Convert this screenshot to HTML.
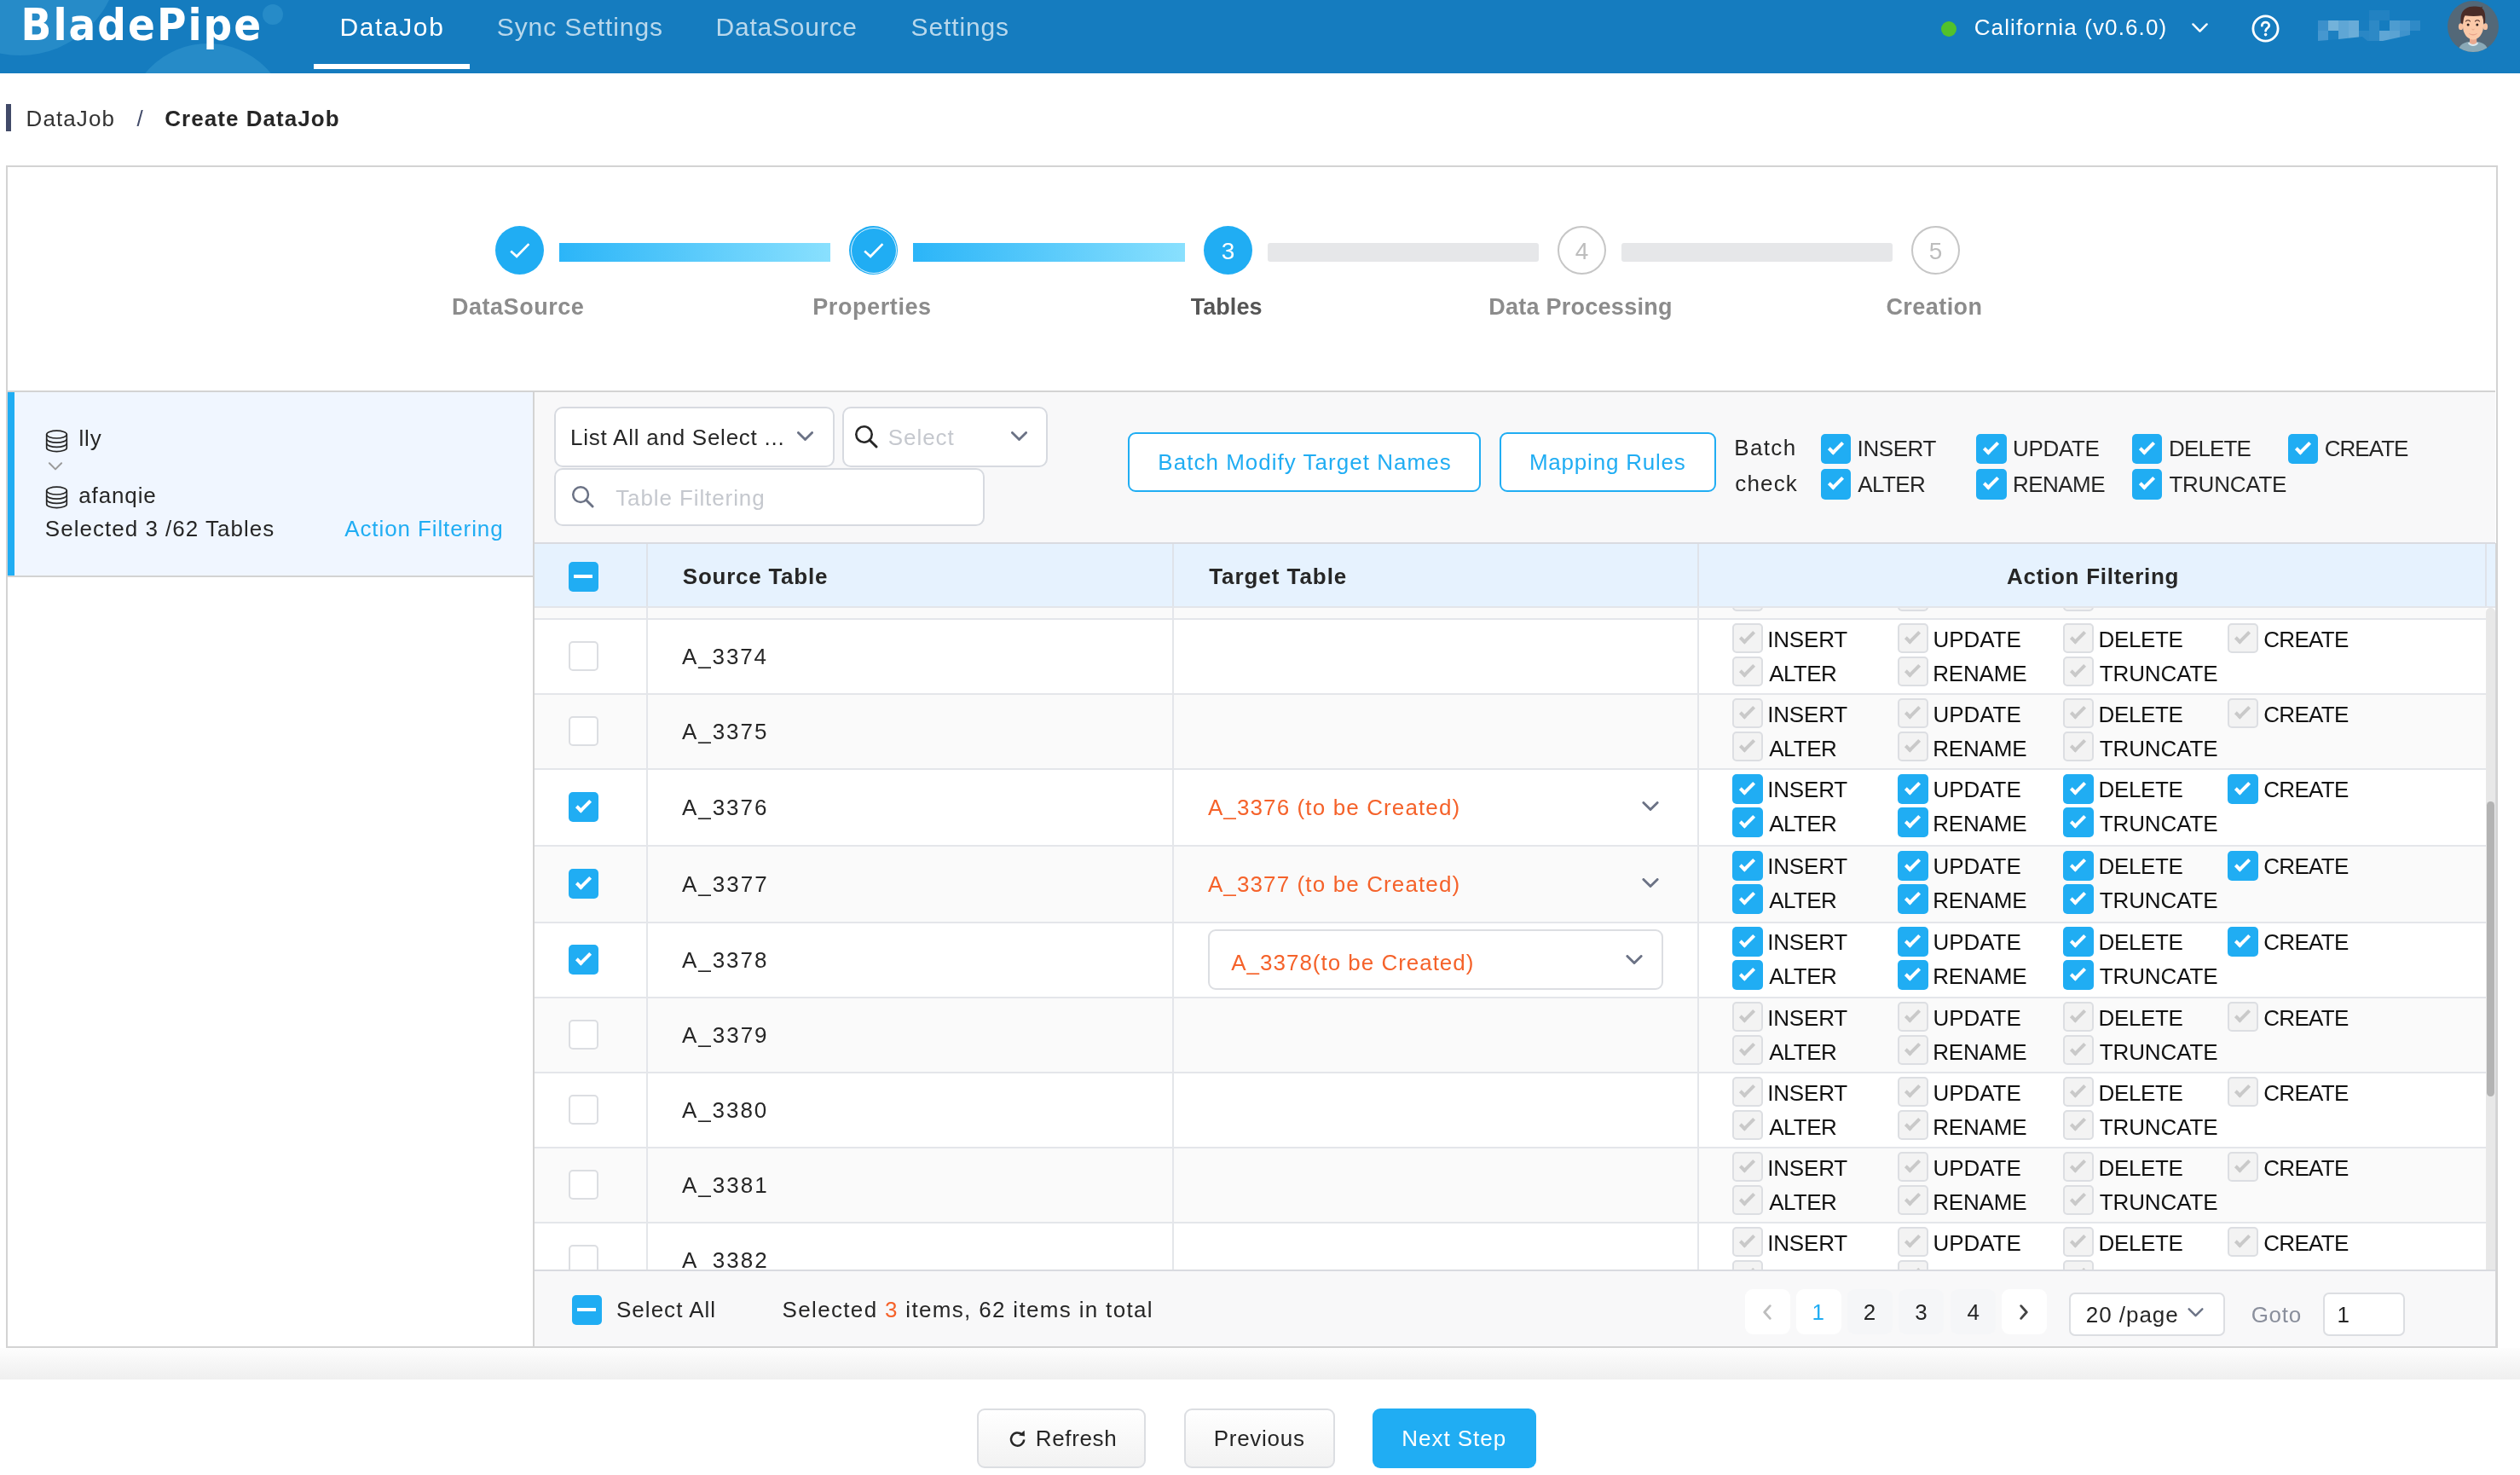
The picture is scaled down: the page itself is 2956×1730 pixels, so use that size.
<!DOCTYPE html>
<html lang="en"><head><meta charset="utf-8"><title>BladePipe - Create DataJob</title>
<style>
html,body{margin:0;padding:0}
body{width:2956px;height:1730px;position:relative;overflow:hidden;background:#fff;font-family:"Liberation Sans",sans-serif;color:#262626}
div,.a,.t,.cb{position:absolute;box-sizing:content-box}
#pg{left:0;top:0;width:2956px;height:1730px;overflow:hidden;will-change:transform}
.t{white-space:nowrap;display:block}
.hdr{background:#157cbf;overflow:hidden}
.logo{font-family:"DejaVu Sans Condensed","DejaVu Sans","Liberation Sans",sans-serif;font-weight:700;font-stretch:condensed}
.circ{border-radius:50%;background:#268bc8;display:block}
.row{left:0;width:2289px;border-bottom:0}
.row::after{content:"";position:absolute;left:0;right:0;top:-1px;height:2px;background:#e4e6ea}
.row.g{background:#fafafa}
.row.w{background:#fff}
.cb{display:block;width:35px;height:35px;border-radius:5px;box-sizing:border-box}
.cb.w{width:36px}
.cb.h{height:36px}
.cb.on,.cb.ind{background:#20adf3}
.cb.off{background:#fff;border:2px solid #dcdee2}
.cb.dis{background:#f3f3f3;border:2px solid #dcdee2}
.cb.on::after,.cb.dis::after{content:"";position:absolute;left:13px;top:6.4px;width:5px;height:14px;border:solid #fff;border-width:0 4px 4px 0;transform:rotate(45deg);box-sizing:content-box}
.cb.dis::after{border-color:#c9c9c9;left:11px;top:4.4px}
.cb.ind::after{content:"";position:absolute;left:6px;top:15px;width:22px;height:4px;background:#fff}
</style></head>
<body>
<div id="pg">
<div class="hdr a" style="left:0;top:0;width:2956px;height:86px">
<i class="a circ" style="left:-92.600px;top:-167.600px;width:233px;height:233px"></i>
<i class="a circ" style="left:149px;top:51px;width:190px;height:190px"></i>
<i class="a circ" style="left:307.800px;top:4.500px;width:24px;height:24px"></i>
</div>
<span class="t logo" style="left:24.5px;top:2.5px;font-size:52.3px;line-height:52.3px;letter-spacing:2.03px;color:#fff">BladePipe</span>
<span class="t" style="left:398.5px;top:17.1px;font-size:30px;line-height:30px;letter-spacing:1.60px;color:#fff;">DataJob</span>
<span class="t" style="left:582.8px;top:17.1px;font-size:30px;line-height:30px;letter-spacing:0.90px;color:#b9d8ec;">Sync Settings</span>
<span class="t" style="left:839.5px;top:17.1px;font-size:30px;line-height:30px;letter-spacing:0.77px;color:#b9d8ec;">DataSource</span>
<span class="t" style="left:1068.6px;top:17.1px;font-size:30px;line-height:30px;letter-spacing:0.86px;color:#b9d8ec;">Settings</span>
<div style="left:368px;top:75px;width:183px;height:6px;background:#fff"></div>
<div style="left:2277px;top:25px;width:18px;height:18px;background:#52c12c;border-radius:50%"></div>
<span class="t" style="left:2315.7px;top:19.0px;font-size:26px;line-height:26px;letter-spacing:1.13px;color:#fff;">California (v0.6.0)</span>
<svg class="a" style="left:2571px;top:27px" width="19" height="11.5" viewBox="0 0 20 12"><path d="M1.5 1.5 L10 10 L18.5 1.5" fill="none" stroke="#fff" stroke-width="2.6" stroke-linecap="round" stroke-linejoin="round"/></svg>
<svg class="a" style="left:2641px;top:17px" width="33" height="33" viewBox="0 0 33 33"><circle cx="16.5" cy="16.5" r="14.6" fill="none" stroke="#fff" stroke-width="2.8"/><path d="M12.3 13.2c0-2.5 1.9-4 4.2-4s4.2 1.5 4.2 3.7c0 3-4.1 3.2-4.1 6.3" fill="none" stroke="#fff" stroke-width="2.8" stroke-linecap="round"/><circle cx="16.6" cy="23.6" r="1.8" fill="#fff"/></svg>
<svg class="a" style="left:2719px;top:12px" width="120" height="36" viewBox="0 0 120 36"><defs><clipPath id="mz"><path d="M0 0H120V24H108V29L76 36H58L52 31L24 34L0 36z"/></clipPath></defs><g clip-path="url(#mz)"><rect x="60" y="0" width="24" height="12" fill="#2282c2"/><rect x="0" y="12" width="12" height="12" fill="#3c90cb"/><rect x="12" y="12" width="12" height="12" fill="#73b2da"/><rect x="24" y="12" width="12" height="12" fill="#5fa6d5"/><rect x="36" y="12" width="12" height="12" fill="#68abd8"/><rect x="48" y="12" width="12" height="12" fill="#187dc0"/><rect x="60" y="12" width="12" height="12" fill="#2d89c6"/><rect x="72" y="12" width="12" height="12" fill="#157cbf"/><rect x="84" y="12" width="12" height="12" fill="#4d9cd0"/><rect x="96" y="12" width="12" height="12" fill="#4496ce"/><rect x="108" y="12" width="12" height="12" fill="#2f8ac7"/><rect x="0" y="24" width="12" height="12" fill="#4697cf"/><rect x="12" y="24" width="12" height="12" fill="#1d80c1"/><rect x="24" y="24" width="12" height="12" fill="#5fa6d5"/><rect x="36" y="24" width="12" height="12" fill="#6aadd8"/><rect x="48" y="24" width="12" height="12" fill="#2a87c5"/><rect x="60" y="24" width="12" height="12" fill="#2d89c6"/><rect x="72" y="24" width="12" height="12" fill="#5fa6d5"/><rect x="84" y="24" width="12" height="12" fill="#5aa3d3"/><rect x="96" y="24" width="12" height="12" fill="#3f93cc"/><rect x="108" y="24" width="12" height="12" fill="#157cbf"/></g></svg>
<svg class="a" style="left:2871px;top:1px" width="60" height="60" viewBox="0 0 60 60"><defs><clipPath id="av"><circle cx="30" cy="30" r="30"/></clipPath></defs><g clip-path="url(#av)"><rect width="60" height="60" fill="#536878"/><path d="M12 62c0-10 7-14.5 18-14.5s18 4.500 18 14.500z" fill="#8aa9b7"/><path d="M26 42h8.200v8c-2 2.500-6.200 2.500-8.200 0z" fill="#e9a98f"/><path d="M25.200 48.600c2 3.200 7.600 3.200 9.600 0l1.300 1.300c-3 4-9.200 4-12.200 0z" fill="#dce9ef"/><ellipse cx="15.600" cy="30.200" rx="2.700" ry="3.900" fill="#f6c0a0"/><ellipse cx="44.400" cy="30.200" rx="2.700" ry="3.900" fill="#f6c0a0"/><path d="M18 24c0-7 3-9.500 12-9.500s12 2.500 12 9.500v6c0 9-6 15.500-12 15.500s-12-6.500-12-15.500z" fill="#fbc9a8"/><path d="M15.800 26.500c-1-9 0.500-13.500 5-17 3-2.400 7-3 10-3 3 0 6 0.300 8.500 1l1.600-0.900-0.500 2.200c3.500 2.500 4.500 8 3.600 17.700l-1.800-0.200c0-3-0.300-6.500-1.700-9-6 0.800-14 0.800-20 0-1.600 2.500-2 6-2.300 9.200z" fill="#4a2c27"/><circle cx="24.100" cy="27.900" r="1.500" fill="#2e1f1c"/><circle cx="34.800" cy="27.900" r="1.500" fill="#2e1f1c"/><path d="M21.400 24c1.300-1.600 3.800-1.600 5.100 0M32.400 24c1.300-1.600 3.800-1.600 5.100 0" fill="none" stroke="#4a2c27" stroke-width="1.100" stroke-linecap="round"/><path d="M28.800 33.400c0.700 0.700 1.700 0.700 2.400 0" fill="none" stroke="#e3a184" stroke-width="0.900" stroke-linecap="round"/><path d="M24.900 37.800c2.500 1.600 7.700 1.600 10.200 0-1 3.600-9.200 3.600-10.200 0z" fill="#e8a58c"/></g></svg>
<div style="left:7px;top:122px;width:6px;height:32px;background:#414a68"></div>
<span class="t" style="left:30.6px;top:126.0px;font-size:26px;line-height:26px;letter-spacing:1.08px;color:#333;">DataJob</span>
<span class="t" style="left:160.5px;top:126.0px;font-size:26px;line-height:26px;color:#414a68;">/</span>
<span class="t" style="left:193.2px;top:126.0px;font-size:26px;line-height:26px;letter-spacing:1.05px;font-weight:700;color:#262626;">Create DataJob</span>
<div style="left:7px;top:194px;width:2919px;height:1383px;border:2px solid #d3d3d3;background:#fff"></div>
<div style="left:0px;top:1581px;width:2956px;height:37px;background:linear-gradient(#fdfdfd,#efefef)"></div>
<i class="a" style="left:581.0px;top:265px;width:57px;height:57px;border-radius:50%;background:#20adf3"></i>
<svg class="a" style="left:581.0px;top:265px" width="57" height="57" viewBox="0 0 57 57"><path d="M18.2 29.6 L25.1 35.8 L39.4 21.1" fill="none" stroke="#fff" stroke-width="2.7" stroke-linecap="butt" stroke-linejoin="miter"/></svg>
<i class="a" style="left:996.0px;top:265px;width:57px;height:57px;border-radius:50%;background:#20adf3"></i>
<svg class="a" style="left:996.0px;top:265px" width="57" height="57" viewBox="0 0 57 57"><path d="M18.2 29.6 L25.1 35.8 L39.4 21.1" fill="none" stroke="#fff" stroke-width="2.7" stroke-linecap="butt" stroke-linejoin="miter"/></svg>
<i class="a" style="left:997.5px;top:266.5px;width:52px;height:52px;border-radius:50%;border:1px solid rgba(255,255,255,.85)"></i>
<div style="left:656px;top:285px;width:318px;height:22px;background:linear-gradient(90deg,#2bb5f8,#89e0fe)"></div>
<div style="left:1071px;top:285px;width:319px;height:22px;background:linear-gradient(90deg,#2bb5f8,#89e0fe)"></div>
<i class="a" style="left:1412px;top:265px;width:57px;height:57px;border-radius:50%;background:#20adf3"></i>
<span class="t" style="left:1432.8px;top:280.8px;font-size:28px;line-height:28px;color:#fff;">3</span>
<div style="left:1487px;top:285px;width:318px;height:22px;background:#e6e7e9;border-radius:3px"></div>
<div style="left:1902px;top:285px;width:318px;height:22px;background:#e6e7e9;border-radius:3px"></div>
<i class="a" style="left:1827px;top:265px;width:53px;height:53px;border-radius:50%;border:2px solid #c6c6c6;background:#fff"></i>
<i class="a" style="left:2242px;top:265px;width:53px;height:53px;border-radius:50%;border:2px solid #c6c6c6;background:#fff"></i>
<span class="t" style="left:1847.8px;top:280.8px;font-size:28px;line-height:28px;color:#bdbdbd;">4</span>
<span class="t" style="left:2262.7px;top:280.8px;font-size:28px;line-height:28px;color:#bdbdbd;">5</span>
<span class="t" style="left:530.0px;top:346.7px;font-size:27px;line-height:27px;letter-spacing:0.52px;font-weight:700;color:#8c8c8c;">DataSource</span>
<span class="t" style="left:953.2px;top:346.7px;font-size:27px;line-height:27px;letter-spacing:0.60px;font-weight:700;color:#8c8c8c;">Properties</span>
<span class="t" style="left:1396.7px;top:346.7px;font-size:27px;line-height:27px;letter-spacing:0.06px;font-weight:700;color:#555;">Tables</span>
<span class="t" style="left:1746.2px;top:346.7px;font-size:27px;line-height:27px;letter-spacing:0.26px;font-weight:700;color:#8c8c8c;">Data Processing</span>
<span class="t" style="left:2212.4px;top:346.7px;font-size:27px;line-height:27px;letter-spacing:0.45px;font-weight:700;color:#8c8c8c;">Creation</span>
<div style="left:9px;top:458px;width:2918px;height:2px;background:#d3d3d3"></div>
<div style="left:9px;top:460px;width:617px;height:215px;background:#f0f6ff"></div>
<div style="left:9px;top:460px;width:8px;height:215px;background:#20adf3"></div>
<div style="left:9px;top:675px;width:617px;height:2px;background:#d3d3d3"></div>
<div style="left:625px;top:460px;width:2px;height:1119px;background:#d3d3d3"></div>
<svg class="a" style="left:52.5px;top:504px" width="27" height="27" viewBox="0 0 27 27"><g fill="none" stroke="#262626" stroke-width="1.7"><ellipse cx="13.5" cy="5.6" rx="11.8" ry="4.4"/><path d="M1.7 5.6v15.6c0 2.4 5.3 4.4 11.8 4.4s11.8-2 11.8-4.4V5.6"/><path d="M1.7 10.8c0 2.4 5.3 4.4 11.8 4.4s11.8-2 11.8-4.4"/><path d="M1.7 16c0 2.4 5.3 4.4 11.8 4.4s11.8-2 11.8-4.4"/></g></svg>
<span class="t" style="left:92.5px;top:501.0px;font-size:26px;line-height:26px;letter-spacing:0.82px;color:#262626;">lly</span>
<svg class="a" style="left:56px;top:542px" width="18" height="10" viewBox="0 0 20 12"><path d="M1.5 1.5 L10 10 L18.5 1.5" fill="none" stroke="#9a9a9a" stroke-width="2.4" stroke-linecap="round" stroke-linejoin="round"/></svg>
<svg class="a" style="left:52.5px;top:570px" width="27" height="27" viewBox="0 0 27 27"><g fill="none" stroke="#262626" stroke-width="1.7"><ellipse cx="13.5" cy="5.6" rx="11.8" ry="4.4"/><path d="M1.7 5.6v15.6c0 2.4 5.3 4.4 11.8 4.4s11.8-2 11.8-4.4V5.6"/><path d="M1.7 10.8c0 2.4 5.3 4.4 11.8 4.4s11.8-2 11.8-4.4"/><path d="M1.7 16c0 2.4 5.3 4.4 11.8 4.4s11.8-2 11.8-4.4"/></g></svg>
<span class="t" style="left:92.2px;top:568.0px;font-size:26px;line-height:26px;letter-spacing:0.89px;color:#262626;">afanqie</span>
<span class="t" style="left:52.8px;top:607.0px;font-size:26px;line-height:26px;letter-spacing:1.02px;color:#262626;">Selected 3 /62 Tables</span>
<span class="t" style="left:404.2px;top:607.0px;font-size:26px;line-height:26px;letter-spacing:0.90px;color:#20adf3;">Action Filtering</span>
<div style="left:627px;top:460px;width:2300px;height:176px;background:#f8f8f9"></div>
<div style="left:649.5px;top:477.3px;width:325px;height:66.4px;border:2px solid #d7dae0;border-radius:10px;background:#fff"></div>
<span class="t" style="left:669.1px;top:499.8px;font-size:26px;line-height:26px;letter-spacing:0.75px;color:#262626;">List All and Select ...</span>
<svg class="a" style="left:934.8px;top:506.4px" width="19" height="11.5" viewBox="0 0 20 12"><path d="M1.5 1.5 L10 10 L18.5 1.5" fill="none" stroke="#6b7285" stroke-width="3" stroke-linecap="round" stroke-linejoin="round"/></svg>
<div style="left:988.4px;top:477.3px;width:237px;height:66.4px;border:2px solid #d7dae0;border-radius:10px;background:#fff"></div>
<svg class="a" style="left:1002px;top:498px" width="28" height="28" viewBox="0 0 28 28"><circle cx="11.5" cy="11.5" r="9.2" fill="none" stroke="#262626" stroke-width="2.6"/><path d="M18.2 18.2 L26 26" stroke="#262626" stroke-width="3" stroke-linecap="round"/></svg>
<span class="t" style="left:1041.8px;top:499.8px;font-size:26px;line-height:26px;letter-spacing:0.94px;color:#c5c8ce;">Select</span>
<svg class="a" style="left:1185.5px;top:506.4px" width="19" height="11.5" viewBox="0 0 20 12"><path d="M1.5 1.5 L10 10 L18.5 1.5" fill="none" stroke="#6b7285" stroke-width="3" stroke-linecap="round" stroke-linejoin="round"/></svg>
<div style="left:649.5px;top:548.8px;width:501px;height:64.4px;border:2px solid #d7dae0;border-radius:10px;background:#fff"></div>
<svg class="a" style="left:670.3px;top:568.6px" width="27" height="27" viewBox="0 0 28 28"><circle cx="11.5" cy="11.5" r="9.2" fill="none" stroke="#6b7285" stroke-width="2.6"/><path d="M18.2 18.2 L26 26" stroke="#6b7285" stroke-width="3" stroke-linecap="round"/></svg>
<span class="t" style="left:722.2px;top:571.0px;font-size:26px;line-height:26px;letter-spacing:0.90px;color:#c5c8ce;">Table Filtering</span>
<div style="left:1323px;top:507px;width:410px;height:66px;border:2px solid #20adf3;border-radius:9px;background:#fff"></div>
<span class="t" style="left:1358.3px;top:529.0px;font-size:26px;line-height:26px;letter-spacing:1.02px;color:#20adf3;">Batch Modify Target Names</span>
<div style="left:1759px;top:507px;width:250px;height:66px;border:2px solid #20adf3;border-radius:9px;background:#fff"></div>
<span class="t" style="left:1793.9px;top:529.0px;font-size:26px;line-height:26px;letter-spacing:0.79px;color:#20adf3;">Mapping Rules</span>
<span class="t" style="left:2034.2px;top:512.2px;font-size:26px;line-height:26px;letter-spacing:1.38px;color:#262626;">Batch</span>
<span class="t" style="left:2035.2px;top:553.5px;font-size:26px;line-height:26px;letter-spacing:1.19px;color:#262626;">check</span>
<i class="cb on" style="left:2136px;top:509px"></i>
<span class="t" style="left:2178.6px;top:513.0px;font-size:26px;line-height:26px;letter-spacing:-0.42px;color:#262626;">INSERT</span>
<i class="cb on w" style="left:2318px;top:509px"></i>
<span class="t" style="left:2361.1px;top:513.0px;font-size:26px;line-height:26px;letter-spacing:-0.36px;color:#262626;">UPDATE</span>
<i class="cb on" style="left:2501px;top:509px"></i>
<span class="t" style="left:2544.1px;top:513.0px;font-size:26px;line-height:26px;letter-spacing:-0.86px;color:#262626;">DELETE</span>
<i class="cb on" style="left:2684px;top:509px"></i>
<span class="t" style="left:2726.7px;top:513.0px;font-size:26px;line-height:26px;letter-spacing:-0.96px;color:#262626;">CREATE</span>
<i class="cb on h" style="left:2136px;top:550px"></i>
<span class="t" style="left:2179.2px;top:555.0px;font-size:26px;line-height:26px;letter-spacing:-0.55px;color:#262626;">ALTER</span>
<i class="cb on h w" style="left:2318px;top:550px"></i>
<span class="t" style="left:2360.9px;top:555.0px;font-size:26px;line-height:26px;letter-spacing:-0.52px;color:#262626;">RENAME</span>
<i class="cb on h" style="left:2501px;top:550px"></i>
<span class="t" style="left:2544.4px;top:555.0px;font-size:26px;line-height:26px;letter-spacing:-0.23px;color:#262626;">TRUNCATE</span>
<div style="left:627px;top:636px;width:2300px;height:77px;background:#e6f2fe;border-top:2px solid #d9dbe0;border-bottom:2px solid #e3e5ea;box-sizing:border-box"></div>
<i class="cb ind" style="left:667px;top:659px"></i>
<span class="t" style="left:800.8px;top:662.7px;font-size:26px;line-height:26px;letter-spacing:0.75px;font-weight:700;color:#262626;">Source Table</span>
<span class="t" style="left:1418.2px;top:662.7px;font-size:26px;line-height:26px;letter-spacing:0.94px;font-weight:700;color:#262626;">Target Table</span>
<span class="t" style="left:2354.0px;top:662.7px;font-size:26px;line-height:26px;letter-spacing:0.72px;font-weight:700;color:#262626;">Action Filtering</span>
<div class="a body" style="left:627px;top:713px;width:2289px;height:777px;overflow:hidden">
<div class="row g" style="top:-75px;height:88px">
<i class="cb off" style="left:40px;top:26px"></i>
<span class="t" style="left:172.9px;top:30.7px;font-size:26px;line-height:26px;letter-spacing:1.99px;color:#262626;">A_3373</span>
<i class="cb dis w" style="left:1405px;top:5px"></i>
<span class="t" style="left:1446.2px;top:11.0px;font-size:26px;line-height:26px;letter-spacing:-0.18px;color:#111;">INSERT</span>
<i class="cb dis w" style="left:1599px;top:5px"></i>
<span class="t" style="left:1640.6px;top:11.0px;font-size:26px;line-height:26px;letter-spacing:-0.08px;color:#111;">UPDATE</span>
<i class="cb dis w" style="left:1793px;top:5px"></i>
<span class="t" style="left:1834.5px;top:11.0px;font-size:26px;line-height:26px;letter-spacing:-0.36px;color:#111;">DELETE</span>
<i class="cb dis w" style="left:1986px;top:5px"></i>
<span class="t" style="left:2028.3px;top:11.0px;font-size:26px;line-height:26px;letter-spacing:-0.70px;color:#111;">CREATE</span>
<i class="cb dis w" style="left:1405px;top:44px"></i>
<span class="t" style="left:1448.2px;top:51.0px;font-size:26px;line-height:26px;letter-spacing:-0.60px;color:#111;">ALTER</span>
<i class="cb dis w" style="left:1599px;top:44px"></i>
<span class="t" style="left:1640.2px;top:51.0px;font-size:26px;line-height:26px;letter-spacing:-0.16px;color:#111;">RENAME</span>
<i class="cb dis w" style="left:1793px;top:44px"></i>
<span class="t" style="left:1835.7px;top:51.0px;font-size:26px;line-height:26px;letter-spacing:-0.10px;color:#111;">TRUNCATE</span>
</div>
<div class="row w" style="top:13px;height:88px">
<i class="cb off" style="left:40px;top:26px"></i>
<span class="t" style="left:172.9px;top:30.7px;font-size:26px;line-height:26px;letter-spacing:1.91px;color:#262626;">A_3374</span>
<i class="cb dis w" style="left:1405px;top:5px"></i>
<span class="t" style="left:1446.2px;top:11.0px;font-size:26px;line-height:26px;letter-spacing:-0.18px;color:#111;">INSERT</span>
<i class="cb dis w" style="left:1599px;top:5px"></i>
<span class="t" style="left:1640.6px;top:11.0px;font-size:26px;line-height:26px;letter-spacing:-0.08px;color:#111;">UPDATE</span>
<i class="cb dis w" style="left:1793px;top:5px"></i>
<span class="t" style="left:1834.5px;top:11.0px;font-size:26px;line-height:26px;letter-spacing:-0.36px;color:#111;">DELETE</span>
<i class="cb dis w" style="left:1986px;top:5px"></i>
<span class="t" style="left:2028.3px;top:11.0px;font-size:26px;line-height:26px;letter-spacing:-0.70px;color:#111;">CREATE</span>
<i class="cb dis w" style="left:1405px;top:44px"></i>
<span class="t" style="left:1448.2px;top:51.0px;font-size:26px;line-height:26px;letter-spacing:-0.60px;color:#111;">ALTER</span>
<i class="cb dis w" style="left:1599px;top:44px"></i>
<span class="t" style="left:1640.2px;top:51.0px;font-size:26px;line-height:26px;letter-spacing:-0.16px;color:#111;">RENAME</span>
<i class="cb dis w" style="left:1793px;top:44px"></i>
<span class="t" style="left:1835.7px;top:51.0px;font-size:26px;line-height:26px;letter-spacing:-0.10px;color:#111;">TRUNCATE</span>
</div>
<div class="row g" style="top:101px;height:88px">
<i class="cb off" style="left:40px;top:26px"></i>
<span class="t" style="left:172.9px;top:30.7px;font-size:26px;line-height:26px;letter-spacing:1.98px;color:#262626;">A_3375</span>
<i class="cb dis w" style="left:1405px;top:5px"></i>
<span class="t" style="left:1446.2px;top:11.0px;font-size:26px;line-height:26px;letter-spacing:-0.18px;color:#111;">INSERT</span>
<i class="cb dis w" style="left:1599px;top:5px"></i>
<span class="t" style="left:1640.6px;top:11.0px;font-size:26px;line-height:26px;letter-spacing:-0.08px;color:#111;">UPDATE</span>
<i class="cb dis w" style="left:1793px;top:5px"></i>
<span class="t" style="left:1834.5px;top:11.0px;font-size:26px;line-height:26px;letter-spacing:-0.36px;color:#111;">DELETE</span>
<i class="cb dis w" style="left:1986px;top:5px"></i>
<span class="t" style="left:2028.3px;top:11.0px;font-size:26px;line-height:26px;letter-spacing:-0.70px;color:#111;">CREATE</span>
<i class="cb dis w" style="left:1405px;top:44px"></i>
<span class="t" style="left:1448.2px;top:51.0px;font-size:26px;line-height:26px;letter-spacing:-0.60px;color:#111;">ALTER</span>
<i class="cb dis w" style="left:1599px;top:44px"></i>
<span class="t" style="left:1640.2px;top:51.0px;font-size:26px;line-height:26px;letter-spacing:-0.16px;color:#111;">RENAME</span>
<i class="cb dis w" style="left:1793px;top:44px"></i>
<span class="t" style="left:1835.7px;top:51.0px;font-size:26px;line-height:26px;letter-spacing:-0.10px;color:#111;">TRUNCATE</span>
</div>
<div class="row w" style="top:189px;height:90px">
<i class="cb on" style="left:40px;top:27px"></i>
<span class="t" style="left:172.9px;top:32.0px;font-size:26px;line-height:26px;letter-spacing:1.99px;color:#262626;">A_3376</span>
<span class="t" style="left:789.9px;top:32.0px;font-size:26px;line-height:26px;letter-spacing:1.12px;color:#f5622a;">A_3376 (to be Created)</span>
<svg class="a" style="left:1299px;top:38px" width="20" height="11.5" viewBox="0 0 20 12"><path d="M1.5 1.5 L10 10 L18.5 1.5" fill="none" stroke="#6b7285" stroke-width="3" stroke-linecap="round" stroke-linejoin="round"/></svg>
<i class="cb on w" style="left:1405px;top:6px"></i>
<span class="t" style="left:1446.2px;top:11.0px;font-size:26px;line-height:26px;letter-spacing:-0.18px;color:#111;">INSERT</span>
<i class="cb on w" style="left:1599px;top:6px"></i>
<span class="t" style="left:1640.6px;top:11.0px;font-size:26px;line-height:26px;letter-spacing:-0.08px;color:#111;">UPDATE</span>
<i class="cb on w" style="left:1793px;top:6px"></i>
<span class="t" style="left:1834.5px;top:11.0px;font-size:26px;line-height:26px;letter-spacing:-0.36px;color:#111;">DELETE</span>
<i class="cb on w" style="left:1986px;top:6px"></i>
<span class="t" style="left:2028.3px;top:11.0px;font-size:26px;line-height:26px;letter-spacing:-0.70px;color:#111;">CREATE</span>
<i class="cb on w" style="left:1405px;top:45px"></i>
<span class="t" style="left:1448.2px;top:51.0px;font-size:26px;line-height:26px;letter-spacing:-0.60px;color:#111;">ALTER</span>
<i class="cb on w" style="left:1599px;top:45px"></i>
<span class="t" style="left:1640.2px;top:51.0px;font-size:26px;line-height:26px;letter-spacing:-0.16px;color:#111;">RENAME</span>
<i class="cb on w" style="left:1793px;top:45px"></i>
<span class="t" style="left:1835.7px;top:51.0px;font-size:26px;line-height:26px;letter-spacing:-0.10px;color:#111;">TRUNCATE</span>
</div>
<div class="row g" style="top:279px;height:90px">
<i class="cb on" style="left:40px;top:27px"></i>
<span class="t" style="left:172.9px;top:32.0px;font-size:26px;line-height:26px;letter-spacing:2.02px;color:#262626;">A_3377</span>
<span class="t" style="left:789.9px;top:32.0px;font-size:26px;line-height:26px;letter-spacing:1.12px;color:#f5622a;">A_3377 (to be Created)</span>
<svg class="a" style="left:1299px;top:38px" width="20" height="11.5" viewBox="0 0 20 12"><path d="M1.5 1.5 L10 10 L18.5 1.5" fill="none" stroke="#6b7285" stroke-width="3" stroke-linecap="round" stroke-linejoin="round"/></svg>
<i class="cb on w" style="left:1405px;top:6px"></i>
<span class="t" style="left:1446.2px;top:11.0px;font-size:26px;line-height:26px;letter-spacing:-0.18px;color:#111;">INSERT</span>
<i class="cb on w" style="left:1599px;top:6px"></i>
<span class="t" style="left:1640.6px;top:11.0px;font-size:26px;line-height:26px;letter-spacing:-0.08px;color:#111;">UPDATE</span>
<i class="cb on w" style="left:1793px;top:6px"></i>
<span class="t" style="left:1834.5px;top:11.0px;font-size:26px;line-height:26px;letter-spacing:-0.36px;color:#111;">DELETE</span>
<i class="cb on w" style="left:1986px;top:6px"></i>
<span class="t" style="left:2028.3px;top:11.0px;font-size:26px;line-height:26px;letter-spacing:-0.70px;color:#111;">CREATE</span>
<i class="cb on w" style="left:1405px;top:45px"></i>
<span class="t" style="left:1448.2px;top:51.0px;font-size:26px;line-height:26px;letter-spacing:-0.60px;color:#111;">ALTER</span>
<i class="cb on w" style="left:1599px;top:45px"></i>
<span class="t" style="left:1640.2px;top:51.0px;font-size:26px;line-height:26px;letter-spacing:-0.16px;color:#111;">RENAME</span>
<i class="cb on w" style="left:1793px;top:45px"></i>
<span class="t" style="left:1835.7px;top:51.0px;font-size:26px;line-height:26px;letter-spacing:-0.10px;color:#111;">TRUNCATE</span>
</div>
<div class="row w" style="top:369px;height:88px">
<i class="cb on" style="left:40px;top:26px"></i>
<span class="t" style="left:172.9px;top:30.7px;font-size:26px;line-height:26px;letter-spacing:1.99px;color:#262626;">A_3378</span>
<div style="left:790px;top:8px;width:530px;height:67px;border:2px solid #dcdee2;border-radius:9px;background:#fff"></div>
<span class="t" style="left:817.3px;top:33.8px;font-size:26px;line-height:26px;letter-spacing:0.98px;color:#f5622a;">A_3378(to be Created)</span>
<svg class="a" style="left:1280px;top:38px" width="20" height="11.5" viewBox="0 0 20 12"><path d="M1.5 1.5 L10 10 L18.5 1.5" fill="none" stroke="#6b7285" stroke-width="3" stroke-linecap="round" stroke-linejoin="round"/></svg>
<i class="cb on w" style="left:1405px;top:5px"></i>
<span class="t" style="left:1446.2px;top:10.0px;font-size:26px;line-height:26px;letter-spacing:-0.18px;color:#111;">INSERT</span>
<i class="cb on w" style="left:1599px;top:5px"></i>
<span class="t" style="left:1640.6px;top:10.0px;font-size:26px;line-height:26px;letter-spacing:-0.08px;color:#111;">UPDATE</span>
<i class="cb on w" style="left:1793px;top:5px"></i>
<span class="t" style="left:1834.5px;top:10.0px;font-size:26px;line-height:26px;letter-spacing:-0.36px;color:#111;">DELETE</span>
<i class="cb on w" style="left:1986px;top:5px"></i>
<span class="t" style="left:2028.3px;top:10.0px;font-size:26px;line-height:26px;letter-spacing:-0.70px;color:#111;">CREATE</span>
<i class="cb on w" style="left:1405px;top:44px"></i>
<span class="t" style="left:1448.2px;top:50.0px;font-size:26px;line-height:26px;letter-spacing:-0.60px;color:#111;">ALTER</span>
<i class="cb on w" style="left:1599px;top:44px"></i>
<span class="t" style="left:1640.2px;top:50.0px;font-size:26px;line-height:26px;letter-spacing:-0.16px;color:#111;">RENAME</span>
<i class="cb on w" style="left:1793px;top:44px"></i>
<span class="t" style="left:1835.7px;top:50.0px;font-size:26px;line-height:26px;letter-spacing:-0.10px;color:#111;">TRUNCATE</span>
</div>
<div class="row g" style="top:457px;height:88px">
<i class="cb off" style="left:40px;top:26px"></i>
<span class="t" style="left:172.9px;top:30.7px;font-size:26px;line-height:26px;letter-spacing:2.01px;color:#262626;">A_3379</span>
<i class="cb dis w" style="left:1405px;top:5px"></i>
<span class="t" style="left:1446.2px;top:11.0px;font-size:26px;line-height:26px;letter-spacing:-0.18px;color:#111;">INSERT</span>
<i class="cb dis w" style="left:1599px;top:5px"></i>
<span class="t" style="left:1640.6px;top:11.0px;font-size:26px;line-height:26px;letter-spacing:-0.08px;color:#111;">UPDATE</span>
<i class="cb dis w" style="left:1793px;top:5px"></i>
<span class="t" style="left:1834.5px;top:11.0px;font-size:26px;line-height:26px;letter-spacing:-0.36px;color:#111;">DELETE</span>
<i class="cb dis w" style="left:1986px;top:5px"></i>
<span class="t" style="left:2028.3px;top:11.0px;font-size:26px;line-height:26px;letter-spacing:-0.70px;color:#111;">CREATE</span>
<i class="cb dis w" style="left:1405px;top:44px"></i>
<span class="t" style="left:1448.2px;top:51.0px;font-size:26px;line-height:26px;letter-spacing:-0.60px;color:#111;">ALTER</span>
<i class="cb dis w" style="left:1599px;top:44px"></i>
<span class="t" style="left:1640.2px;top:51.0px;font-size:26px;line-height:26px;letter-spacing:-0.16px;color:#111;">RENAME</span>
<i class="cb dis w" style="left:1793px;top:44px"></i>
<span class="t" style="left:1835.7px;top:51.0px;font-size:26px;line-height:26px;letter-spacing:-0.10px;color:#111;">TRUNCATE</span>
</div>
<div class="row w" style="top:545px;height:88px">
<i class="cb off" style="left:40px;top:26px"></i>
<span class="t" style="left:172.9px;top:30.7px;font-size:26px;line-height:26px;letter-spacing:1.96px;color:#262626;">A_3380</span>
<i class="cb dis w" style="left:1405px;top:5px"></i>
<span class="t" style="left:1446.2px;top:11.0px;font-size:26px;line-height:26px;letter-spacing:-0.18px;color:#111;">INSERT</span>
<i class="cb dis w" style="left:1599px;top:5px"></i>
<span class="t" style="left:1640.6px;top:11.0px;font-size:26px;line-height:26px;letter-spacing:-0.08px;color:#111;">UPDATE</span>
<i class="cb dis w" style="left:1793px;top:5px"></i>
<span class="t" style="left:1834.5px;top:11.0px;font-size:26px;line-height:26px;letter-spacing:-0.36px;color:#111;">DELETE</span>
<i class="cb dis w" style="left:1986px;top:5px"></i>
<span class="t" style="left:2028.3px;top:11.0px;font-size:26px;line-height:26px;letter-spacing:-0.70px;color:#111;">CREATE</span>
<i class="cb dis w" style="left:1405px;top:44px"></i>
<span class="t" style="left:1448.2px;top:51.0px;font-size:26px;line-height:26px;letter-spacing:-0.60px;color:#111;">ALTER</span>
<i class="cb dis w" style="left:1599px;top:44px"></i>
<span class="t" style="left:1640.2px;top:51.0px;font-size:26px;line-height:26px;letter-spacing:-0.16px;color:#111;">RENAME</span>
<i class="cb dis w" style="left:1793px;top:44px"></i>
<span class="t" style="left:1835.7px;top:51.0px;font-size:26px;line-height:26px;letter-spacing:-0.10px;color:#111;">TRUNCATE</span>
</div>
<div class="row g" style="top:633px;height:88px">
<i class="cb off" style="left:40px;top:26px"></i>
<span class="t" style="left:172.9px;top:30.7px;font-size:26px;line-height:26px;letter-spacing:2.02px;color:#262626;">A_3381</span>
<i class="cb dis w" style="left:1405px;top:5px"></i>
<span class="t" style="left:1446.2px;top:11.0px;font-size:26px;line-height:26px;letter-spacing:-0.18px;color:#111;">INSERT</span>
<i class="cb dis w" style="left:1599px;top:5px"></i>
<span class="t" style="left:1640.6px;top:11.0px;font-size:26px;line-height:26px;letter-spacing:-0.08px;color:#111;">UPDATE</span>
<i class="cb dis w" style="left:1793px;top:5px"></i>
<span class="t" style="left:1834.5px;top:11.0px;font-size:26px;line-height:26px;letter-spacing:-0.36px;color:#111;">DELETE</span>
<i class="cb dis w" style="left:1986px;top:5px"></i>
<span class="t" style="left:2028.3px;top:11.0px;font-size:26px;line-height:26px;letter-spacing:-0.70px;color:#111;">CREATE</span>
<i class="cb dis w" style="left:1405px;top:44px"></i>
<span class="t" style="left:1448.2px;top:51.0px;font-size:26px;line-height:26px;letter-spacing:-0.60px;color:#111;">ALTER</span>
<i class="cb dis w" style="left:1599px;top:44px"></i>
<span class="t" style="left:1640.2px;top:51.0px;font-size:26px;line-height:26px;letter-spacing:-0.16px;color:#111;">RENAME</span>
<i class="cb dis w" style="left:1793px;top:44px"></i>
<span class="t" style="left:1835.7px;top:51.0px;font-size:26px;line-height:26px;letter-spacing:-0.10px;color:#111;">TRUNCATE</span>
</div>
<div class="row w" style="top:721px;height:88px">
<i class="cb off" style="left:40px;top:26px"></i>
<span class="t" style="left:172.9px;top:30.7px;font-size:26px;line-height:26px;letter-spacing:2.02px;color:#262626;">A_3382</span>
<i class="cb dis w" style="left:1405px;top:5px"></i>
<span class="t" style="left:1446.2px;top:11.0px;font-size:26px;line-height:26px;letter-spacing:-0.18px;color:#111;">INSERT</span>
<i class="cb dis w" style="left:1599px;top:5px"></i>
<span class="t" style="left:1640.6px;top:11.0px;font-size:26px;line-height:26px;letter-spacing:-0.08px;color:#111;">UPDATE</span>
<i class="cb dis w" style="left:1793px;top:5px"></i>
<span class="t" style="left:1834.5px;top:11.0px;font-size:26px;line-height:26px;letter-spacing:-0.36px;color:#111;">DELETE</span>
<i class="cb dis w" style="left:1986px;top:5px"></i>
<span class="t" style="left:2028.3px;top:11.0px;font-size:26px;line-height:26px;letter-spacing:-0.70px;color:#111;">CREATE</span>
<i class="cb dis w" style="left:1405px;top:44px"></i>
<span class="t" style="left:1448.2px;top:51.0px;font-size:26px;line-height:26px;letter-spacing:-0.60px;color:#111;">ALTER</span>
<i class="cb dis w" style="left:1599px;top:44px"></i>
<span class="t" style="left:1640.2px;top:51.0px;font-size:26px;line-height:26px;letter-spacing:-0.16px;color:#111;">RENAME</span>
<i class="cb dis w" style="left:1793px;top:44px"></i>
<span class="t" style="left:1835.7px;top:51.0px;font-size:26px;line-height:26px;letter-spacing:-0.10px;color:#111;">TRUNCATE</span>
</div>
<div style="left:131px;top:0px;width:2px;height:778px;background:#e4e6ea"></div>
<div style="left:748px;top:0px;width:2px;height:778px;background:#e4e6ea"></div>
<div style="left:1364px;top:0px;width:2px;height:778px;background:#e4e6ea"></div>
</div>
<div style="left:758px;top:638px;width:2px;height:73px;background:#dfe3ea"></div>
<div style="left:1375px;top:638px;width:2px;height:73px;background:#dfe3ea"></div>
<div style="left:1991px;top:638px;width:2px;height:73px;background:#dfe3ea"></div>
<div style="left:2915px;top:638px;width:2px;height:73px;background:#dfe3ea"></div>
<div style="left:2916px;top:713px;width:10.5px;height:777px;background:#e8e8e8;border-radius:5px 5px 0 0"></div>
<div style="left:2926.5px;top:637px;width:1.5px;height:942px;background:#d6d6d9"></div>
<div style="left:2917px;top:940px;width:9px;height:346px;background:#b3b3b3;border-radius:5px"></div>
<div style="left:627px;top:1489px;width:2300px;height:90px;background:#f8f8f9;border-top:2px solid #d9dbe0;box-sizing:border-box"></div>
<i class="cb ind" style="left:671px;top:1519px"></i>
<span class="t" style="left:723.0px;top:1523.4px;font-size:26px;line-height:26px;letter-spacing:1.02px;color:#262626;">Select All</span>
<span class="t" style="left:917.6px;top:1523.4px;font-size:26px;line-height:26px;letter-spacing:1.33px;color:#262626;">Selected <b style="font-weight:400;color:#f5622a">3</b> items, 62 items in total</span>
<div style="left:2047px;top:1512px;width:52.5px;height:52.5px;background:#fff;border-radius:9px"></div>
<div style="left:2107px;top:1512px;width:52.5px;height:52.5px;background:#fff;border-radius:9px"></div>
<div style="left:2167px;top:1512px;width:52.5px;height:52.5px;background:#f5f6f8;border-radius:9px"></div>
<div style="left:2227px;top:1512px;width:52.5px;height:52.5px;background:#f5f6f8;border-radius:9px"></div>
<div style="left:2288px;top:1512px;width:52.5px;height:52.5px;background:#f5f6f8;border-radius:9px"></div>
<div style="left:2348px;top:1512px;width:52.5px;height:52.5px;background:#fff;border-radius:9px"></div>
<svg class="a" style="left:2067px;top:1530px" width="12" height="18" viewBox="0 0 14 22"><path d="M11 2 L3 11 L11 20" fill="none" stroke="#bdbdbd" stroke-width="3.4" stroke-linecap="round" stroke-linejoin="round"/></svg>
<svg class="a" style="left:2368px;top:1530px" width="12" height="18" viewBox="0 0 14 22"><path d="M3 2 L11 11 L3 20" fill="none" stroke="#444" stroke-width="3.4" stroke-linecap="round" stroke-linejoin="round"/></svg>
<span class="t" style="left:2125.4px;top:1526.0px;font-size:26px;line-height:26px;color:#20adf3;">1</span>
<span class="t" style="left:2185.8px;top:1526.0px;font-size:26px;line-height:26px;color:#262626;">2</span>
<span class="t" style="left:2246.3px;top:1526.0px;font-size:26px;line-height:26px;color:#262626;">3</span>
<span class="t" style="left:2307.4px;top:1526.0px;font-size:26px;line-height:26px;color:#262626;">4</span>
<div style="left:2427px;top:1516px;width:179px;height:47px;border:2px solid #dcdee2;border-radius:7px;background:#fff"></div>
<span class="t" style="left:2446.7px;top:1528.8px;font-size:26px;line-height:26px;letter-spacing:0.98px;color:#262626;">20 /page</span>
<svg class="a" style="left:2566px;top:1534px" width="19" height="11" viewBox="0 0 20 12"><path d="M1.5 1.5 L10 10 L18.5 1.5" fill="none" stroke="#6b7285" stroke-width="2.6" stroke-linecap="round" stroke-linejoin="round"/></svg>
<span class="t" style="left:2640.7px;top:1529.0px;font-size:26px;line-height:26px;letter-spacing:0.68px;color:#8a8f9c;">Goto</span>
<div style="left:2725px;top:1516px;width:92px;height:47px;border:2px solid #dcdee2;border-radius:7px;background:#fff"></div>
<span class="t" style="left:2741.5px;top:1528.8px;font-size:26px;line-height:26px;color:#262626;">1</span>
<div style="left:1146px;top:1652px;width:194px;height:66px;border:2px solid #dcdee2;border-radius:9px;background:linear-gradient(#fff,#f2f2f2)"></div>
<svg class="a" style="left:1183px;top:1677px" width="22" height="22" viewBox="0 0 22 22"><path d="M18.2 11.5a7.6 7.6 0 1 1-2.6-6.2" fill="none" stroke="#262626" stroke-width="2.5"/><path d="M12.2 6.6 L19 7.6 L18.6 0.8z" fill="#262626"/></svg>
<span class="t" style="left:1214.8px;top:1673.9px;font-size:26px;line-height:26px;letter-spacing:0.63px;color:#262626;">Refresh</span>
<div style="left:1389px;top:1652px;width:173px;height:66px;border:2px solid #dcdee2;border-radius:9px;background:linear-gradient(#fff,#f2f2f2)"></div>
<span class="t" style="left:1423.7px;top:1673.9px;font-size:26px;line-height:26px;letter-spacing:0.73px;color:#262626;">Previous</span>
<div style="left:1610px;top:1652px;width:192px;height:70px;background:#20adf3;border-radius:9px"></div>
<span class="t" style="left:1644.3px;top:1673.9px;font-size:26px;line-height:26px;letter-spacing:0.96px;color:#fff;">Next Step</span>
</div>
</body></html>
